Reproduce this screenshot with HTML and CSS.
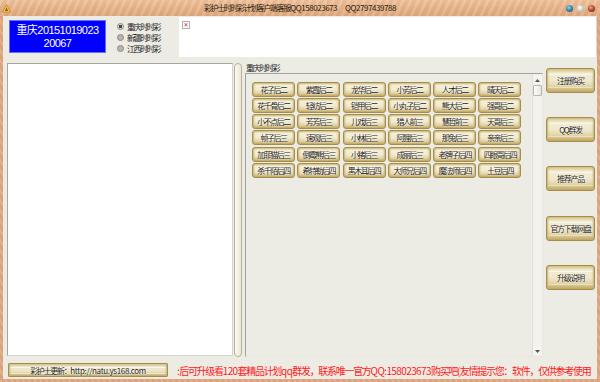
FILE: index.html
```html
<!DOCTYPE html>
<html lang="zh-CN">
<head>
<meta charset="utf-8">
<title>彩护士时时彩计划客户端</title>
<link rel="stylesheet" href="styles.css">
</head>
<body>
<div class="window">
  <div class="titlebar">
    <div class="tb-left">
      <svg class="logo" width="9" height="9" viewBox="0 0 9 9">
        <path d="M4.5 0.5 L8.5 8 L0.5 8 Z" fill="#f2d24a" stroke="#b98a1c" stroke-width="0.8"/>
        <path d="M4.5 3 L6 7 L3 7 Z" fill="#c0392b"/>
      </svg>
    </div>
    <div class="title">彩护士时时彩计划客户端 客服<span class="lat">QQ158023673</span><span class="sp"></span><span class="lat">QQ2797439788</span></div>
    <div class="ctrls">
      <span class="dot d1"></span><span class="dot d2"></span><span class="dot d3"></span>
    </div>
  </div>
  <div class="frame">
    <div class="content">
      <div class="top">
        <div class="bluebox"><div class="bl">重庆20151019023</div><div class="bl">20067</div></div>
        <div class="radios">
          <div class="radio"><span class="rc on"></span>重庆时时彩</div>
          <div class="radio"><span class="rc"></span>新疆时时彩</div>
          <div class="radio"><span class="rc"></span>江西时时彩</div>
        </div>
        <div class="imgbox"><span class="broken">✕</span></div>
      </div>
      <div class="middle">
        <div class="log"></div>
        <div class="bar"></div>
        <div class="group">
          <div class="glabel">重庆时时彩</div>
          <div class="gframe">
            <div class="grid">
              <div class="btn">花子后二</div><div class="btn">紫霞后二</div><div class="btn">龙华后二</div><div class="btn">小芳后二</div><div class="btn">人才后二</div><div class="btn">晴天后二</div>
              <div class="btn">花千骨后二</div><div class="btn">轻纺后二</div><div class="btn">铠甲后二</div><div class="btn">小丸子后二</div><div class="btn">熊大后二</div><div class="btn">强哥后二</div>
              <div class="btn">小不点后二</div><div class="btn">芳芳后三</div><div class="btn">儿戏后三</div><div class="btn">猎人前三</div><div class="btn">慧哲前三</div><div class="btn">天哥后三</div>
              <div class="btn">帧子后三</div><div class="btn">速观后三</div><div class="btn">小林后三</div><div class="btn">阿狸后三</div><div class="btn">那兔后三</div><div class="btn">亲亲后三</div>
              <div class="btn">加菲猫后三</div><div class="btn">倒霉熊后三</div><div class="btn">小猪后三</div><div class="btn">成丽后三</div><div class="btn">老牌子后四</div><div class="btn">四眼哥后四</div>
              <div class="btn">杀千陌后四</div><div class="btn">希特勒后四</div><div class="btn">黑木耳后四</div><div class="btn">大师兄后四</div><div class="btn">魔法师后四</div><div class="btn">土豆后四</div>
            </div>
            <div class="vscroll">
              <div class="arrow up"><svg width="5" height="3" viewBox="0 0 5 3"><path d="M0 3 L2.5 0 L5 3 Z" fill="#555"/></svg></div>
              <div class="thumb"></div>
              <div class="track"></div>
              <div class="arrow down"><svg width="5" height="3" viewBox="0 0 5 3"><path d="M0 0 L2.5 3 L5 0 Z" fill="#555"/></svg></div>
            </div>
          </div>
        </div>
        <div class="side">
          <div class="btn big">注册购买</div>
          <div class="btn big">QQ群发</div>
          <div class="btn big">推荐产品</div>
          <div class="btn big">官方下载网盘</div>
          <div class="btn big">升级说明</div>
        </div>
      </div>
      <div class="bottom">
        <div class="btn upd">彩护士更新：<span class="lat2">http://natu.ys168.com</span></div>
        <div class="marquee"><span class="l">:</span>后可升级看<span class="l">120</span>套精品计划<span class="l">qq</span>群发，联系唯一官方<span class="l">QQ:158023673</span>购买吧<span class="l">(</span>友情提示您：软件，仅供参考使用</div>
      </div>
    </div>
  </div>
</div>
</body>
</html>
```
FILE: styles.css
```css
html, body {
  margin: 0;
  padding: 0;
}
body {
  width: 600px;
  height: 382px;
  overflow: hidden;
  font-family: "Noto Sans CJK SC", "Liberation Sans", sans-serif;
}
.window {
  width: 600px;
  height: 382px;
  display: flex;
  flex-direction: column;
  background: #e3a97f;
}
.titlebar {
  height: 16px;
  display: grid;
  grid-template-columns: 1fr auto 1fr;
  align-items: center;
  background:
    repeating-linear-gradient(115deg, rgba(255,255,255,0.10) 0 3px, rgba(0,0,0,0.03) 3px 7px),
    linear-gradient(to bottom, #efc29b 0%, #e7b388 55%, #e1a87d 100%);
}
.tb-left {
  display: flex;
  align-items: center;
  padding-left: 2px;
}
.logo { display: block; }
.title {
  font-size: 8px;
  line-height: 16px;
  color: #2b1c10;
  letter-spacing: -1.4px;
  white-space: nowrap;
}
.title .lat { letter-spacing: -0.45px; }
.title .sp { display: inline-block; width: 8px; }
.ctrls {
  display: flex;
  justify-content: flex-end;
  gap: 4px;
  padding-right: 5px;
}
.dot {
  width: 7px;
  height: 7px;
  border-radius: 50%;
  display: block;
}
.d1 { background: radial-gradient(circle at 40% 35%, #8fd0e8 0, #2d7f9e 55%, #1d5368 100%); }
.d2 { background: radial-gradient(circle at 40% 35%, #ffffff 0, #c9c9c9 55%, #9a9a9a 100%); }
.d3 { background: radial-gradient(circle at 40% 35%, #f0a090 0, #a8402c 55%, #6e2416 100%); }

.frame {
  flex: 1;
  display: flex;
  padding: 0 3px 3px 3px;
  background:
    repeating-linear-gradient(60deg, rgba(255,255,255,0.08) 0 2px, rgba(0,0,0,0.04) 2px 5px),
    #e3a97f;
}
.content {
  flex: 1;
  background: #ecebe4;
  display: flex;
  flex-direction: column;
}

/* top */
.top {
  display: flex;
  height: 40px;
  margin-top: 1px;
}
.bluebox {
  margin-left: 6px;
  margin-top: 3px;
  width: 95px;
  height: 28px;
  padding-top: 3px;
  background: #0000ff;
  border: 1px solid #6a6aff;
  color: #ffffff;
  font-family: "Liberation Sans", "Noto Sans CJK SC", sans-serif;
  font-size: 11px;
  letter-spacing: -0.55px;
  text-align: center;
  display: flex;
  flex-direction: column;
}
.bl {
  height: 12.7px;
  line-height: 12.7px;
  white-space: nowrap;
}
.radios {
  margin-left: 11px;
  margin-top: 4px;
  display: flex;
  flex-direction: column;
}
.radio {
  display: flex;
  align-items: center;
  height: 11px;
  font-size: 8px;
  letter-spacing: -1.4px;
  color: #222;
  white-space: nowrap;
}
.rc {
  width: 5px;
  height: 5px;
  border-radius: 50%;
  border: 1px solid #8a8a8a;
  background: #b9b5ad;
  margin-right: 3px;
  display: block;
}
.rc.on {
  background: radial-gradient(circle, #4a4a4a 0 1.5px, #d8d4cc 2px);
}
.imgbox {
  margin-left: auto;
  width: 417px;
  height: 40px;
  background: #ffffff;
  border-right: 1px solid #d8d8d0;
  position: relative;
}
.broken {
  position: absolute;
  left: 3px;
  top: 4px;
  width: 6px;
  height: 6px;
  border: 1px solid #b0b0b0;
  color: #e02020;
  font-size: 6px;
  line-height: 6px;
  text-align: center;
  font-family: "DejaVu Sans", sans-serif;
  font-weight: bold;
}

/* middle */
.middle {
  display: flex;
  margin-top: 6px;
  height: 294px;
}
.log {
  margin-left: 4px;
  width: 224px;
  height: 291px;
  background: #ffffff;
  border: 1px solid #a7a6a0;
  border-right-color: #d6d5cf;
  border-bottom-color: #d6d5cf;
}
.bar {
  margin-left: 1px;
  width: 6px;
  height: 292px;
  border-radius: 4px;
  border: 1px solid #b9b19a;
  background: linear-gradient(to right, #fbfaf3, #ebe7d6);
}
.group {
  margin-left: 3px;
  width: 298px;
  display: flex;
  flex-direction: column;
}
.glabel {
  height: 10px;
  font-size: 8px;
  line-height: 9px;
  letter-spacing: -1.4px;
  color: #222;
  padding-left: 1px;
  white-space: nowrap;
}
.gframe {
  height: 282px;
  border: 1px solid #a3a29c;
  border-right-color: #e8e7e0;
  border-bottom-color: #e8e7e0;
  display: flex;
}
.grid {
  display: grid;
  grid-template-columns: repeat(6, 43px);
  grid-auto-rows: 15px;
  column-gap: 2.3px;
  row-gap: 1.3px;
  padding-left: 6px;
  padding-top: 7.5px;
  align-content: start;
}
.btn {
  box-sizing: border-box;
  display: flex;
  align-items: center;
  justify-content: center;
  border: 1px solid #a58d4c;
  border-radius: 3px;
  background: linear-gradient(to bottom, #d3bf80 0%, #f4efd9 18%, #f1ebd2 50%, #e2d5a4 78%, #bea462 100%);
  box-shadow: inset 2px 0 2px -1px #c8b276, inset -2px 0 2px -1px #c8b276;
  font-size: 8px;
  letter-spacing: -1.5px;
  color: #1f1b12;
  text-shadow: 0 0 2px #ffffff, 0 0 1px #ffffff;
  white-space: nowrap;
}
.vscroll {
  margin-left: auto;
  width: 9px;
  display: flex;
  flex-direction: column;
  background: #f3f2ec;
  border-left: 1px solid #e2e1da;
}
.arrow {
  height: 8px;
  display: flex;
  align-items: center;
  justify-content: center;
  background: #f5f4ef;
}
.arrow.up { margin-top: 2px; }
.arrow.down { margin-bottom: 1px; }
.thumb {
  height: 9px;
  margin: 1px 0;
  border: 1px solid #b8b8b0;
  border-radius: 1px;
  background: linear-gradient(to right, #fdfdfb, #e8e7e0);
}
.track { flex: 1; }

.side {
  margin-left: 3px;
  padding-top: 5px;
  display: flex;
  flex-direction: column;
  gap: 24.2px;
}
.btn.big {
  width: 49px;
  height: 25px;
  font-size: 8px;
  letter-spacing: -1.3px;
  background:
    linear-gradient(to bottom, transparent 0 5px, rgba(255,255,255,0.55) 5px 6px, transparent 6px 18px, rgba(255,255,255,0.4) 18px 19px, transparent 19px),
    linear-gradient(to bottom, #d3bf80 0%, #f2ecd4 18%, #efe8cd 50%, #e0d2a0 78%, #bea462 100%);
}

/* bottom */
.bottom {
  display: flex;
  align-items: center;
  margin-top: 6px;
  height: 14px;
}
.btn.upd {
  margin-left: 5px;
  width: 160px;
  height: 14px;
  border-radius: 1px;
  font-size: 8px;
  letter-spacing: -1.3px;
  background:
    linear-gradient(to bottom, transparent 0 3px, rgba(255,255,255,0.7) 3px 4px, transparent 4px 9px, rgba(255,255,255,0.5) 9px 10px, transparent 10px),
    linear-gradient(to bottom, #d5c386 0%, #efe9d0 25%, #ece4c6 60%, #d6c792 85%, #bea66a 100%);
}
.btn.upd .lat2 { letter-spacing: -0.35px; }
.marquee {
  margin-left: 9px;
  flex: 1;
  overflow: hidden;
  white-space: nowrap;
  color: #ff1a1a;
  font-size: 10px;
  letter-spacing: -1.3px;
  line-height: 14px;
  padding-top: 2px;
}
.marquee .l { letter-spacing: -0.6px; }
```
